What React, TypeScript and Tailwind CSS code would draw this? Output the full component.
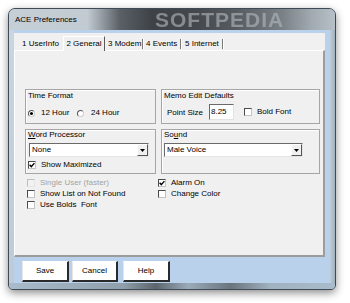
import React from "react";

function Check({ checked = false, disabled = false }: { checked?: boolean; disabled?: boolean }) {
  return (
    <span
      className={
        disabled
          ? "w-[8px] h-[8px] shrink-0 border border-t-[#bdbdbd] border-l-[#bdbdbd] border-r-[#e6e6e6] border-b-[#e6e6e6] bg-[#f2f2f2] flex items-center justify-center"
          : "w-[8px] h-[8px] shrink-0 border border-t-[#4a4a4a] border-l-[#4a4a4a] border-r-[#c4c4c4] border-b-[#c4c4c4] bg-white flex items-center justify-center"
      }
    >
      {checked && (
        <svg width="6" height="6" viewBox="0 0 6 6">
          <path d="M0.6 2.8 L2.3 4.6 L5.4 1.1" stroke="#000" strokeWidth="1.4" fill="none" />
        </svg>
      )}
    </span>
  );
}

function Radio({ checked = false }: { checked?: boolean }) {
  return (
    <span className="w-[7px] h-[7px] shrink-0 rounded-full border border-t-[#555] border-l-[#555] border-r-[#cfcfcf] border-b-[#cfcfcf] bg-white flex items-center justify-center">
      {checked && <span className="w-[3px] h-[3px] rounded-full bg-black" />}
    </span>
  );
}

function Select({ value, width }: { value: string; width: string }) {
  return (
    <div
      className={`${width} h-[14px] bg-white border border-t-[#6a6a6a] border-l-[#6a6a6a] border-r-[#e4e4e4] border-b-[#e4e4e4] flex items-center`}
    >
      <span className="flex-1 pl-[2px] leading-[10px]">{value}</span>
      <span className="w-[11px] h-[12px] bg-[#f0f0f0] border border-t-white border-l-white border-r-[#555] border-b-[#555] flex items-center justify-center">
        <svg width="5" height="3" viewBox="0 0 5 3">
          <path d="M0 0 H5 L2.5 3 Z" fill="#000" />
        </svg>
      </span>
    </div>
  );
}

function CheckRow({ label, checked = false, disabled = false }: { label: string; checked?: boolean; disabled?: boolean }) {
  return (
    <div className="h-[11px] flex items-center gap-[5px]">
      <Check checked={checked} disabled={disabled} />
      <span className={disabled ? "text-[#a3a3a3] whitespace-pre leading-[10px]" : "text-black whitespace-pre leading-[10px]"}>{label}</span>
    </div>
  );
}

export default function App() {
  return (
    <div className="w-[350px] h-[303px] bg-white overflow-hidden pl-[8px] pt-[8px] font-['Liberation_Sans',Arial,sans-serif] text-[8px] text-black">
      {/* Window */}
      <div className="w-[328px] h-[282px] rounded-t-[7px] rounded-b-[5px] border border-[#3e4a55] bg-[#b7c7d5] shadow-[0_3px_9px_rgba(0,0,0,0.45)] flex flex-col overflow-hidden">
        {/* Title bar */}
        <div className="relative h-[21px] flex items-center pl-[6px] bg-[linear-gradient(90deg,#c7cfd6_0%,#c3cbd2_24%,#9aa1a8_28%,#5a6066_34%,#3e4247_44%,#45494e_58%,#575c61_70%,#7a8187_84%,#a3abb2_93%,#b8c0c7_100%)]">
          <span className="relative z-10 text-[8px] leading-[10px] text-black">ACE Preferences</span>
          <span className="absolute left-[146px] top-[0px] text-[21px] leading-[21px] font-bold tracking-[1px] text-[#b4babf]/60 blur-[0.7px] select-none">
            SOFTPEDIA
          </span>
        </div>

        {/* Middle: side frames + client */}
        <div className="flex h-[253px]">
          <div className="w-[5px] bg-[linear-gradient(180deg,#c9d5e0_0%,#bccbd8_100%)]" />
          {/* Client area */}
          <div className="w-[315px] bg-[#b9d1ea] flex flex-col pt-[3px]">
            {/* Tab control */}
            <div className="w-[311px] flex flex-col">
              {/* Tab header */}
              <div className="h-[17px] bg-[#f0f0f0] flex items-end pl-[1px]">
                <div className="w-[48px] h-[17px] flex items-center pl-[7px] pt-[4px]">
                  <span className="leading-[10px]">1 UserInfo</span>
                </div>
                <div className="relative z-10 w-[42px] h-[15px] -mb-[1px] bg-[#f0f0f0] border-l border-t border-l-white border-t-white border-r border-r-[#5a5a5a] flex items-center justify-center pb-[1px]">
                  <span className="leading-[10px]">2 General</span>
                </div>
                <div className="w-[39px] h-[17px] flex items-center pt-[4px]">
                  <span className="flex-1 pl-[3px] leading-[10px]">3 Modem</span>
                  <span className="w-[2px] h-[10px] border-l border-l-[#7a7a7a] border-r border-r-white" />
                </div>
                <div className="w-[38px] h-[17px] flex items-center pt-[4px]">
                  <span className="flex-1 pl-[2px] leading-[10px]">4 Events</span>
                  <span className="w-[2px] h-[10px] border-l border-l-[#7a7a7a] border-r border-r-white" />
                </div>
                <div className="w-[42px] h-[17px] flex items-center pt-[4px]">
                  <span className="flex-1 pl-[3px] leading-[10px]">5 Internet</span>
                  <span className="w-[2px] h-[10px] border-l border-l-[#7a7a7a] border-r border-r-white" />
                </div>
                <div className="flex-1" />
              </div>

              {/* Tab panel */}
              <div className="h-[207px] bg-[#f0f0f0] border-t border-l border-t-white border-l-white border-r-[2px] border-b-[2px] border-r-[#9c9c9c] border-b-[#9c9c9c] pl-[10px] pt-[38px]">
                {/* Row 1 */}
                <div className="flex gap-[5px] h-[35px]">
                  <div className="w-[131px] h-[35px] border border-[#a5a5a5] shadow-[inset_1px_1px_0_#fff] pt-[1px]">
                    <div className="pl-[2px] leading-[10px]">Time Format</div>
                    <div className="mt-[7px] h-[10px] flex items-center pl-[2px]">
                      <div className="w-[49px] flex items-center gap-[6px]">
                        <Radio checked />
                        <span className="leading-[10px]">12 Hour</span>
                      </div>
                      <div className="flex items-center gap-[7px]">
                        <Radio />
                        <span className="leading-[10px]">24 Hour</span>
                      </div>
                    </div>
                  </div>
                  <div className="w-[159px] h-[35px] border border-[#a5a5a5] shadow-[inset_1px_1px_0_#fff] pt-[1px]">
                    <div className="pl-[2px] leading-[10px]">Memo Edit Defaults</div>
                    <div className="mt-[3px] h-[16px] flex items-center pl-[5px]">
                      <span className="w-[42px] leading-[10px] pt-[1px]">Point Size</span>
                      <div className="w-[25px] h-[16px] bg-white border border-t-[#6a6a6a] border-l-[#6a6a6a] border-r-[#e2e2e2] border-b-[#e2e2e2] flex items-center pl-[1px]">
                        <span className="leading-[10px]">8.25</span>
                      </div>
                      <div className="ml-[10px] flex items-center gap-[5px]">
                        <Check />
                        <span className="leading-[10px]">Bold Font</span>
                      </div>
                    </div>
                  </div>
                </div>

                {/* Row 2 */}
                <div className="flex gap-[5px] h-[45px] mt-[5px]">
                  <div className="w-[131px] h-[45px] border border-[#a5a5a5] shadow-[inset_1px_1px_0_#fff]">
                    <div className="pl-[2px] leading-[10px]">
                      <span className="underline decoration-[0.5px] underline-offset-[1px]">W</span>ord Processor
                    </div>
                    <div className="mt-[3px] ml-[3px]">
                      <Select value="None" width="w-[120px]" />
                    </div>
                    <div className="mt-[3px] ml-[2px] h-[10px] flex items-center gap-[5px]">
                      <Check checked />
                      <span className="leading-[10px]">Show Maximized</span>
                    </div>
                  </div>
                  <div className="w-[159px] h-[45px] border border-[#a5a5a5] shadow-[inset_1px_1px_0_#fff]">
                    <div className="pl-[2px] leading-[10px]">
                      <span>So</span>
                      <span className="underline decoration-[0.5px] underline-offset-[1px]">u</span>
                      <span>nd</span>
                    </div>
                    <div className="mt-[3px] ml-[2px]">
                      <Select value="Male Voice" width="w-[139px]" />
                    </div>
                  </div>
                </div>

                {/* Checkbox rows */}
                <div className="flex mt-[3px]">
                  <div className="w-[133px] pl-[2px] flex flex-col">
                    <CheckRow label="Single User (faster)" disabled />
                    <CheckRow label="Show List on Not Found" />
                    <CheckRow label="Use Bolds  Font" />
                  </div>
                  <div className="flex flex-col">
                    <CheckRow label="Alarm On" checked />
                    <CheckRow label="Change Color" />
                  </div>
                </div>
              </div>
            </div>

            {/* Buttons */}
            <div className="flex pl-[8px] pt-[4px]">
              <button className="w-[47px] h-[21px] bg-white border-t border-l border-t-white border-l-[#e6e6e6] border-r-[2px] border-b-[2px] border-r-[#2a2a2a] border-b-[#2a2a2a] flex items-center justify-center">
                <span className="leading-[10px]">Save</span>
              </button>
              <button className="ml-[3px] w-[46px] h-[21px] bg-white border-t border-l border-t-white border-l-[#e6e6e6] border-r-[2px] border-b-[2px] border-r-[#2a2a2a] border-b-[#2a2a2a] flex items-center justify-center">
                <span className="leading-[10px]">Cancel</span>
              </button>
              <button className="ml-[5px] w-[47px] h-[21px] bg-white border-t border-l border-t-white border-l-[#e6e6e6] border-r-[2px] border-b-[2px] border-r-[#2a2a2a] border-b-[#2a2a2a] flex items-center justify-center">
                <span className="leading-[10px]">Help</span>
              </button>
            </div>
          </div>
          <div className="w-[6px] bg-[linear-gradient(90deg,#c4d2de_0%,#9fb0be_100%)]" />
        </div>

        {/* Bottom frame */}
        <div className="h-[6px] bg-[linear-gradient(90deg,#a9bccb_0%,#8f9fac_35%,#5c656d_45%,#9aabb9_55%,#6a747c_68%,#a0b1bf_80%,#a9bccb_100%)]" />
      </div>
    </div>
  );
}
